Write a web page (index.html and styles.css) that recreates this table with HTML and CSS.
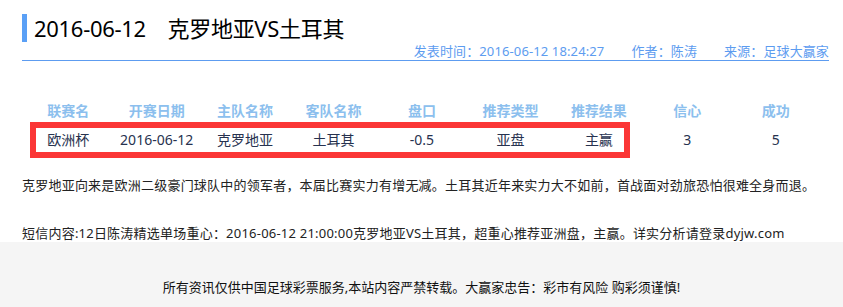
FILE: index.html
```html
<!DOCTYPE html>
<html lang="zh-CN">
<head>
<meta charset="utf-8">
<title>2016-06-12 克罗地亚VS土耳其</title>
<link rel="stylesheet" href="styles.css">
</head>
<body>
<div class="page">
  <div class="article">
    <h1 class="title">2016-06-12　克罗地亚VS土耳其</h1>
    <div class="meta">
      <span>发表时间：2016-06-12 18:24:27</span>
      <span class="meta-item">作者：陈涛</span>
      <span class="meta-item">来源：足球大赢家</span>
    </div>
    <div class="table">
      <div class="row head">
        <div>联赛名</div><div>开赛日期</div><div>主队名称</div><div>客队名称</div><div>盘口</div><div>推荐类型</div><div>推荐结果</div><div>信心</div><div>成功</div>
      </div>
      <div class="row data">
        <div>欧洲杯</div><div>2016-06-12</div><div>克罗地亚</div><div>土耳其</div><div>-0.5</div><div>亚盘</div><div>主赢</div><div>3</div><div>5</div>
      </div>
      <div class="highlight"></div>
    </div>
    <p class="text first">克罗地亚向来是欧洲二级豪门球队中的领军者，本届比赛实力有增无减。土耳其近年来实力大不如前，首战面对劲旅恐怕很难全身而退。</p>
    <p class="text second">短信内容:12日陈涛精选单场重心：2016-06-12 21:00:00克罗地亚VS土耳其，超重心推荐亚洲盘，主赢。详实分析请登录dyjw.com</p>
  </div>
  <div class="footer">所有资讯仅供中国足球彩票服务,本站内容严禁转载。大赢家忠告：彩市有风险 购彩须谨慎!</div>
</div>
</body>
</html>
```
FILE: styles.css
```css
* { box-sizing: border-box; }
html, body { margin: 0; padding: 0; background: #fff; }
body {
  font-family: "Noto Sans", "Noto Sans CJK SC", sans-serif;
  color: #222;
}
.article {
  width: 807px;
  margin-left: 22px;
  padding-top: 14px;
}
.title {
  margin: 0;
  font-size: 22px;
  font-weight: normal;
  line-height: 28px;
  height: 28px;
  color: #000;
  border-left: 5px solid #5aa0f6;
  padding-left: 7px;
  letter-spacing: -0.3px;
}
.meta {
  display: flex;
  justify-content: flex-end;
  font-size: 13px;
  line-height: 17px;
  padding-top: 1px;
  color: #5d9cf0;
  border-bottom: 1px solid #5d9cf0;
  white-space: nowrap;
  letter-spacing: 0.12px;
}
.meta-item { margin-left: 27px; }
.table {
  position: relative;
  margin-top: 36px;
  margin-left: 2px;
  width: 796px;
}
.row {
  display: grid;
  grid-template-columns: repeat(9, 1fr);
  text-align: center;
  font-size: 14px;
}
.row.head {
  height: 28px;
  line-height: 28px;
  color: #8cbfee;
  font-weight: bold;
}
.row.data {
  margin-top: 1px;
  height: 28px;
  line-height: 28px;
  color: #27324f;
}
.highlight {
  position: absolute;
  left: 6px;
  top: 25px;
  width: 600px;
  height: 36px;
  border: 6px solid #fb3636;
}
.text {
  margin: 0;
  font-size: 13px;
  line-height: 18px;
  color: #222;
  white-space: nowrap;
  letter-spacing: 0.22px;
}
.text.first { margin-top: 22px; }
.text.second { margin-top: 30px; }
.footer {
  background: #f5f5f5;
  height: 67px;
  padding-top: 36px;
  text-align: center;
  font-size: 13px;
  line-height: 18px;
  color: #111;
}
```
